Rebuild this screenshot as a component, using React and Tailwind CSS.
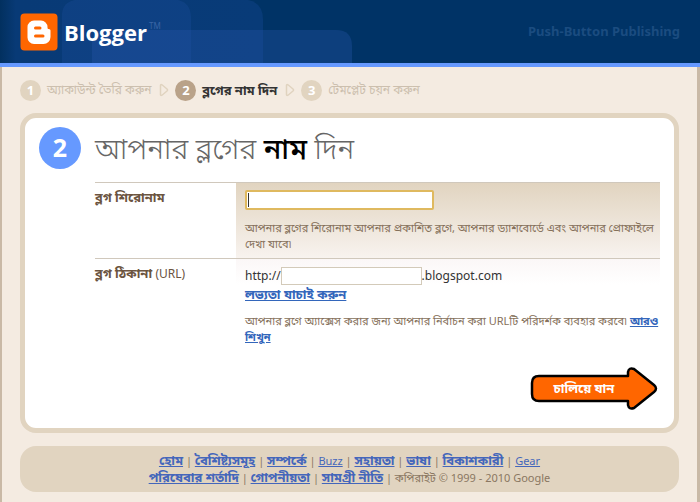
import React, { useState } from 'react';

const STEPS = [
  { number: 1, label: 'অ্যাকাউন্ট তৈরি করুন' },
  { number: 2, label: 'ব্লগের নাম দিন' },
  { number: 3, label: 'টেমপ্লেট চয়ন করুন' },
];

const FOOTER_LINKS = ['হোম', 'বৈশিষ্ট্যসমূহ', 'সম্পর্কে', 'Buzz', 'সহায়তা', 'ভাষা', 'বিকাশকারী', 'Gear'];
const LEGAL_LINKS = ['পরিষেবার শর্তাদি', 'গোপনীয়তা', 'সামগ্রী নীতি'];

function BloggerMark() {
  return (
    <svg viewBox="0 0 38 38" className="w-[38px] h-[38px] shrink-0" aria-hidden="true">
      <rect x="0.5" y="0.5" width="37" height="37" rx="4" fill="#ff6600" />
      <path
        d="M14 7.500h7a6.500 6.500 0 0 1 6.500 6.500v.8c0 .8.500 1.200 1.200 1.200 1.200 0 1.800.7 1.800 1.800V24a7 7 0 0 1-7 7H14a6.500 6.500 0 0 1-6.500-6.500V14a6.500 6.500 0 0 1 6.500-6.500z"
        fill="#fff"
      />
      <path d="M15.500 15h4.500M15.500 23h7.500" stroke="#ff6600" strokeWidth="3" strokeLinecap="round" />
    </svg>
  );
}

function Header() {
  return (
    <header className="relative overflow-hidden flex items-center justify-between h-[67px] px-5 border-b-4 border-[#6699ff] bg-[#003366]">
      {/* Translucent rounded blocks behind the logo */}
      <svg className="absolute left-0 top-0 w-[360px] h-[63px]" viewBox="0 0 360 63" aria-hidden="true">
        <defs>
          <linearGradient id="glow" x1="0" x2="1">
            <stop offset="0" stopColor="#02305f" />
            <stop offset="0.06" stopColor="#083a76" />
            <stop offset="1" stopColor="#083b78" />
          </linearGradient>
        </defs>
        <path d="M0 0H248Q263 3 263 20V63H0z" fill="url(#glow)" />
        <path d="M62 63V14Q63 2 75 0H178Q191 3 191 18V63z" fill="#1a4a96" fillOpacity="0.4" />
        <path d="M92 63V42Q92 30 104 30H336Q352 30 352 46V63z" fill="#2456a8" fillOpacity="0.35" />
      </svg>
      <a href="#home" className="relative flex items-center gap-[6px] text-white">
        <BloggerMark />
        <span className="flex items-start">
          <span className="font-['Open_Sans','Noto_Sans',sans-serif] font-bold text-[22px] leading-8">Blogger</span>
          <span className="text-[8px] leading-3 mt-1 ml-[2px] text-[#3a66a6]">TM</span>
        </span>
      </a>
      <p className="relative text-[13px] font-bold text-[#1b4c80]">Push-Button Publishing</p>
    </header>
  );
}

function StepArrow() {
  return (
    <svg viewBox="0 0 10 14" className="w-[10px] h-[14px] shrink-0" aria-hidden="true">
      <path d="M1.500 2.500Q1.500 1 3 1.800L8 6Q9 7 8 8L3 12.200Q1.500 13 1.500 11.500z" fill="none" stroke="#e0d3bf" strokeWidth="1.500" />
    </svg>
  );
}

function Steps({ current }) {
  return (
    <ol className="flex items-center gap-2 leading-[22px]">
      {STEPS.map((step, idx) => (
        <li key={step.number} className="flex items-center gap-[6px] whitespace-nowrap">
          {idx > 0 && <StepArrow />}
          <span
            className={`flex items-center justify-center w-[21px] h-[21px] rounded-full text-[13px] font-bold text-white ${
              step.number === current ? 'bg-[#b9a289]' : 'bg-[#e1d4c0]'
            }`}
          >
            {step.number}
          </span>
          <span className={step.number === current ? 'text-[13px] font-bold text-[#333333]' : 'text-[12px] text-[#ccbfae]'}>
            {step.label}
          </span>
        </li>
      ))}
    </ol>
  );
}

function LinkRow({ links, children }) {
  return (
    <p>
      {links.map((link, idx) => (
        <React.Fragment key={link}>
          {idx > 0 && ' | '}
          <a href="#footer" className={`underline text-[#4466bb] ${/^[A-Z]/.test(link) ? '' : 'font-bold text-[13px]'}`}>
            {link}
          </a>
        </React.Fragment>
      ))}
      {children}
    </p>
  );
}

export default function App() {
  const [title, setTitle] = useState('');
  const [address, setAddress] = useState('');

  return (
    <div className="min-h-screen bg-[#f4ebe1] border-l-2 border-r-[3px] border-[#c9b9a6] font-['Noto_Sans','Noto_Sans_Bengali',sans-serif] text-[12px]">
      <div className="-ml-[2px] -mr-[3px]">
        <Header />
      </div>

      <main className="px-[18px] pt-3">
        <Steps current={2} />

        <form
          onSubmit={(e) => e.preventDefault()}
          className="mt-3 bg-white border-[5px] border-[#e1d4c0] rounded-2xl px-[14px] pt-[9px] pb-[18px]"
        >
          <div className="flex items-center gap-[14px]">
            <span className="flex items-center justify-center shrink-0 w-[42px] h-[42px] rounded-full bg-[#6699ff] text-white text-[25px] font-bold">
              2
            </span>
            <h1 className="text-[29px] leading-[42px] font-light text-[#666666]">
              আপনার ব্লগের <strong className="font-medium text-black">নাম</strong> দিন
            </h1>
          </div>

          <div className="ml-14 mt-[13px]">
            <div className="flex border-t border-[#d0c8bc]">
              <label htmlFor="title" className="w-[141px] shrink-0 pt-1 font-bold text-[13px] leading-5 text-[#6b543f]">
                ব্লগ শিরোনাম
              </label>
              <div className="flex-1 h-[75px] pl-[9px] pt-[7px] bg-linear-to-b from-[#e1d4c0] to-[#f8f3ef]">
                <div className="relative w-[189px]">
                  <input
                    id="title"
                    type="text"
                    value={title}
                    onChange={(e) => setTitle(e.target.value)}
                    className="block w-full h-5 px-[2px] bg-white border-2 border-[#dfb95f] rounded-[2px] outline-none"
                  />
                  {!title && <span className="absolute left-[3px] top-[3px] w-px h-[14px] bg-[#333333] pointer-events-none" />}
                </div>
                <p className="mt-[10px] text-[11px] leading-4 text-[#85705a]">
                  আপনার ব্লগের শিরোনাম আপনার প্রকাশিত ব্লগে, আপনার ড্যাশবোর্ডে এবং আপনার প্রোফাইলে দেখা যাবে৷
                </p>
              </div>
            </div>

            <div className="flex border-t border-[#d0c8bc]">
              <label htmlFor="address" className="w-[141px] shrink-0 pt-1 font-bold text-[13px] leading-5 text-[#6b543f]">
                ব্লগ ঠিকানা <span className="font-normal text-[12px]">(URL)</span>
              </label>
              <div className="flex-1 pl-[9px] pt-2 bg-linear-to-b from-[#fbf7f7] to-white to-30%">
                <div className="flex items-center text-[#333333]">
                  <span>http://</span>
                  <input
                    id="address"
                    type="text"
                    value={address}
                    onChange={(e) => setAddress(e.target.value)}
                    className="w-[141px] h-[18px] px-1 bg-white border border-[#d3cab9] outline-none"
                  />
                  <span>.blogspot.com</span>
                </div>
                <a href="#check" className="block text-[13px] leading-[18px] font-bold underline text-[#3366bb]">
                  লভ্যতা যাচাই করুন
                </a>
                <p className="mt-[10px] text-[11px] leading-4 text-[#85705a]">
                  আপনার ব্লগে অ্যাক্সেস করার জন্য আপনার নির্বাচন করা URLটি পরিদর্শক ব্যবহার করবে৷{' '}
                  <a href="#more" className="font-bold underline text-[#3366bb]">
                    আরও শিখুন
                  </a>
                </p>
              </div>
            </div>
          </div>

          <div className="flex justify-end mt-[22px] pr-[2px]">
            <button type="submit" className="relative w-32 h-[43px] pr-5 text-[13px] font-bold text-white">
              <svg viewBox="0 0 128 43" className="absolute inset-0 w-full h-full" aria-hidden="true">
                <path
                  d="M9 9H98V5Q99 0 104 2L124 18Q128 21.500 124 25L104 41Q99 43 98 38V34H9Q2 34 2 27V16Q2 9 9 9z"
                  fill="#ff6600"
                  stroke="#000"
                  strokeWidth="2.500"
                  strokeLinejoin="round"
                />
              </svg>
              <span className="relative">চালিয়ে যান</span>
            </button>
          </div>
        </form>

        <footer className="mt-[13px] rounded-2xl bg-[#e1d4c0] py-[6px] text-center text-[11px] leading-4 text-[#8a7762]">
          <LinkRow links={FOOTER_LINKS} />
          <LinkRow links={LEGAL_LINKS}> | কপিরাইট © 1999 - 2010 Google</LinkRow>
        </footer>
      </main>
    </div>
  );
}
